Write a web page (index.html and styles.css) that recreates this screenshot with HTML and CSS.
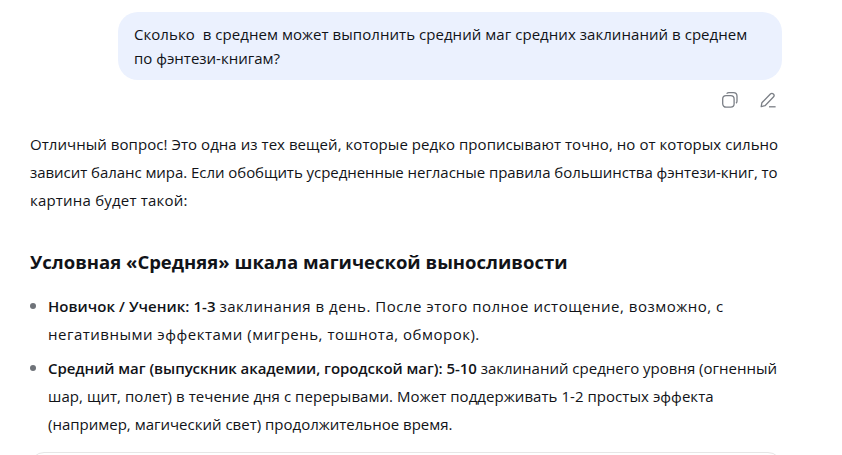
FILE: index.html
```html
<!DOCTYPE html>
<html lang="en">
<head>
    <meta charset="UTF-8">
    <title>Чат</title>
    <link rel="stylesheet" href="styles.css">
</head>
<body>
    <main class="chat">
        <div class="user-message">
            <p class="bubble">
                <span class="line ls-1">Сколько&nbsp; в среднем может выполнить средний маг средних заклинаний в среднем</span>
                <span class="line">по фэнтези-книгам?</span>
            </p>
            <div class="message-actions">
                <button class="icon-button" aria-label="Копировать">
                    <svg width="18" height="18" viewBox="0 0 18 18" fill="none" stroke="#7b7f86" stroke-width="1.3">
                        <rect x="1.7" y="4.6" width="11.4" height="11.6" rx="3.4"/>
                        <path d="M5.6 2.6c.6-.6 1.4-.9 2.4-.9h4.4c2.2 0 3.6 1.4 3.6 3.6v4.6c0 1-.3 1.8-.9 2.4"/>
                    </svg>
                </button>
                <button class="icon-button" aria-label="Редактировать">
                    <svg width="18" height="18" viewBox="0 0 18 18" fill="none" stroke="#7b7f86" stroke-width="1.3" stroke-linejoin="round">
                        <path d="M2.2 15.6l.7-3.9L11.4 3c.9-.9 2.2-.9 3 0 .9.9.9 2.1 0 3L6 14.7z"/>
                        <path d="M10 15.8h6.6"/>
                    </svg>
                </button>
            </div>
        </div>

        <article class="answer">
            <p class="intro">
                <span class="line ls-1">Отличный вопрос! Это одна из тех вещей, которые редко прописывают точно, но от которых сильно</span>
                <span class="line ls-neg">зависит баланс мира. Если обобщить усредненные негласные правила большинства фэнтези-книг, то</span>
                <span class="line ls-2">картина будет такой:</span>
            </p>
            <h2>Условная «Средняя» шкала магической выносливости</h2>
            <ul>
                <li>
                    <span class="line"><b class="ls-1">Новичок / Ученик: 1-3</b> <span class="ls-3">заклинания в день. После этого полное истощение, возможно, с</span></span>
                    <span class="line ls-3">негативными эффектами (мигрень, тошнота, обморок).</span>
                </li>
                <li>
                    <span class="line"><b class="ls-neg">Средний маг (выпускник академии, городской маг): 5-10</b> заклинаний среднего уровня (огненный</span>
                    <span class="line ls-1">шар, щит, полет) в течение дня с перерывами. Может поддерживать 1-2 простых эффекта</span>
                    <span class="line">(например, магический свет) продолжительное время.</span>
                </li>
            </ul>
            <div class="next-card"></div>
        </article>
    </main>
</body>
</html>
```

FILE: styles.css
```css
/* Page */
html, body {
    height: 100%;
    overflow: hidden;
}

body {
    margin: 0;
    background-color: #fff;
    color: #111318;
    font-family: "Open Sans", "Noto Sans", sans-serif;
    font-size: 15px;
}

.chat {
    box-sizing: border-box;
    width: 842px;
    height: 100%;
    padding: 12px 60px 0 30px;
    overflow: hidden;
}

/* Text lines, tracked a little to keep the original line lengths */
.line {
    display: block;
    white-space: nowrap;
}

.ls-neg {
    letter-spacing: -0.05px;
}

.ls-1 {
    letter-spacing: 0.05px;
}

.ls-2 {
    letter-spacing: 0.2px;
}

.ls-3 {
    letter-spacing: 0.5px;
}

/* Question */
.user-message {
    display: flex;
    flex-direction: column;
    align-items: flex-end;
}

.bubble {
    margin: 0;
    width: 632px;
    padding: 10px 16px;
    border-radius: 20px;
    background-color: #ebf1fe;
    line-height: 24px;
}

.message-actions {
    display: flex;
    gap: 20px;
    margin-top: 11px;
    padding-right: 5px;
}

.icon-button {
    display: flex;
    padding: 0;
    border: none;
    background: none;
}

/* Answer */
.answer {
    margin-top: 21px;
}

.intro {
    margin: 0;
    line-height: 28px;
}

h2 {
    margin: 33px 0 0;
    font-size: 18.5px;
    font-weight: 700;
    line-height: 30px;
}

ul {
    margin: 15px 0 0;
    padding: 0 0 0 18px;
    list-style: none;
}

li {
    position: relative;
    line-height: 28px;
}

li + li {
    margin-top: 6px;
}

li::before {
    content: "";
    position: absolute;
    left: -18px;
    top: 11px;
    width: 6px;
    height: 6px;
    border-radius: 50%;
    background-color: #6f7379;
}

li b {
    font-weight: 600;
}

.next-card {
    height: 40px;
    margin-top: 14px;
    border: 1px solid #e6e6e6;
    border-radius: 14px;
}
```
